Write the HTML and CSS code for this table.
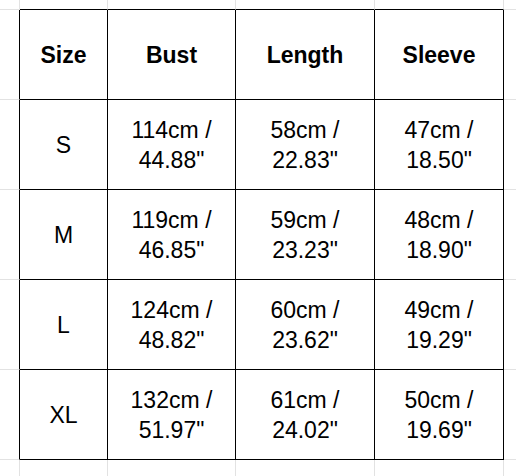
FILE: index.html
```html
<!DOCTYPE html>
<html>
<head>
<meta charset="utf-8">
<link rel="stylesheet" href="styles.css">
</head>
<body>
<div class="sheet">
  <div class="c g"></div><div class="c g top"></div><div class="c g top"></div><div class="c g top"></div><div class="c g top"></div><div class="c g0"></div>

  <div class="c g lft"></div>
  <div class="c t h">Size</div><div class="c t h">Bust</div><div class="c t h">Length</div><div class="c t h">Sleeve</div>
  <div class="c g0 b"></div>

  <div class="c g lft"></div>
  <div class="c t">S</div><div class="c t">114cm /<br>44.88"</div><div class="c t">58cm /<br>22.83"</div><div class="c t">47cm /<br>18.50"</div>
  <div class="c g0 b"></div>

  <div class="c g lft"></div>
  <div class="c t">M</div><div class="c t">119cm /<br>46.85"</div><div class="c t">59cm /<br>23.23"</div><div class="c t">48cm /<br>18.90"</div>
  <div class="c g0 b"></div>

  <div class="c g lft"></div>
  <div class="c t">L</div><div class="c t">124cm /<br>48.82"</div><div class="c t">60cm /<br>23.62"</div><div class="c t">49cm /<br>19.29"</div>
  <div class="c g0 b"></div>

  <div class="c g lft"></div>
  <div class="c t">XL</div><div class="c t">132cm /<br>51.97"</div><div class="c t">61cm /<br>24.02"</div><div class="c t">50cm /<br>19.69"</div>
  <div class="c g0 b"></div>

  <div class="c r"></div><div class="c r"></div><div class="c r"></div><div class="c r"></div><div class="c r"></div><div class="c"></div>
</div>
</body>
</html>
```

FILE: styles.css
```css
html, body {
  margin: 0;
  padding: 0;
  background: #ffffff;
}
.sheet {
  width: 516px;
  height: 476px;
  display: grid;
  grid-template-columns: 20px 88px 128px 139px 129px 1fr;
  grid-template-rows: 10px repeat(5, 90px) 1fr;
  font-family: "Liberation Sans", Arial, sans-serif;
  font-size: 23px;
  line-height: 30px;
  color: #000;
  overflow: hidden;
}
.c {
  box-sizing: border-box;
}
.g {
  border-right: 1px solid #e2e2e2;
  border-bottom: 1px solid #e2e2e2;
}
.g0 {
  border-bottom: 1px solid #e2e2e2;
}
.g.top {
  border-bottom-color: #000;
}
.g.lft {
  border-right-color: #000;
}
.r {
  border-right: 1px solid #e2e2e2;
}
.t {
  border-right: 1px solid #000;
  border-bottom: 1px solid #000;
  display: flex;
  align-items: center;
  justify-content: center;
  text-align: center;
  padding-top: 1px;
}
.h {
  font-weight: bold;
}
```
